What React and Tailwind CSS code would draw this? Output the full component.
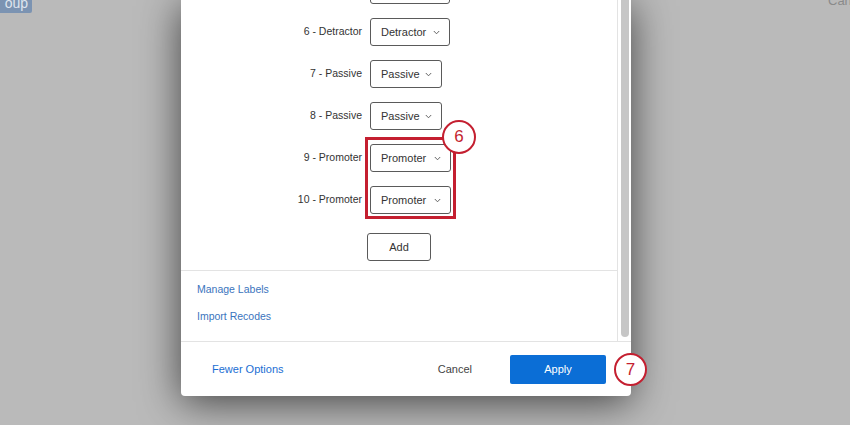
import React from "react";

const Chevron = () => (
  <svg width="7" height="5" viewBox="0 0 7 5" className="ml-auto shrink-0">
    <path d="M0.8 1 L3.5 3.8 L6.2 1" fill="none" stroke="#555" strokeWidth="0.9" />
  </svg>
);

const Select = ({ value, w }) => (
  <div
    className={`flex items-center h-[28px] border border-[#5a5a5a] rounded-[3px] bg-white pl-[10px] pr-[9px] text-[11px] text-[#333] ${w}`}
  >
    <span>{value}</span>
    <Chevron />
  </div>
);

const Row = ({ label, value, w }) => (
  <div className="flex items-center h-[28px]">
    <div className="w-[189px] pr-[8px] text-right text-[10.5px] text-[#333]">{label}</div>
    <Select value={value} w={w} />
  </div>
);

export default function App() {
  return (
    <div
      className="relative w-[850px] h-[425px] overflow-hidden bg-[#bababa]"
      style={{ fontFamily: '"Liberation Sans", Arial, sans-serif' }}
    >
      {/* background page bits */}
      <div className="absolute left-0 top-0 w-[32px] h-[13px] bg-[#7b93b2] rounded-br-[2px] overflow-hidden">
        <span className="absolute right-[4px] top-[-7px] text-[14px] text-[#dfe5ee]">oup</span>
      </div>
      <div className="absolute left-[828px] top-[-9px] text-[13px] text-[#8a8a8a]">Cancel</div>

      {/* modal */}
      <div className="absolute left-[181px] top-0 w-[450px] h-[396px] bg-white rounded-b-[4px] shadow-[0_6px_40px_rgba(0,0,0,0.65)] flex flex-col overflow-hidden">
        <div className="flex h-[341px]">
          <div className="flex-1 overflow-hidden flex flex-col">
            <div className="flex flex-col gap-[14px] mt-[-24px]">
              <Row label="" value="Detractor" w="w-[80px]" />
              <Row label="6 - Detractor" value="Detractor" w="w-[80px]" />
              <Row label="7 - Passive" value="Passive" w="w-[72px]" />
              <Row label="8 - Passive" value="Passive" w="w-[72px]" />
              <Row label="9 - Promoter" value="Promoter" w="w-[81px]" />
              <Row label="10 - Promoter" value="Promoter" w="w-[81px]" />
            </div>
            <div className="flex justify-center mt-[19px]">
              <button className="w-[64px] h-[28px] border border-[#5a5a5a] rounded-[3px] text-[11px] text-[#333] bg-white">
                Add
              </button>
            </div>
            <div className="mt-[9px] border-t border-[#e3e3e3] pl-[16px] pt-[12px] flex flex-col gap-[14px] text-[10.5px] text-[#3b74bd]">
              <div className="leading-[13px]">Manage Labels</div>
              <div className="leading-[13px]">Import Recodes</div>
            </div>
          </div>
          <div className="w-[14px] border-l border-[#e3e3e3] flex justify-center">
            <div className="w-[8px] h-[337px] bg-[#c6c6c6] rounded-b-[4px] ml-[1px]" />
          </div>
        </div>
        <div className="flex-1 border-t border-[#e3e3e3] flex items-center pl-[31px] pr-[25px]">
          <span className="text-[11px] text-[#1a6ed3]">Fewer Options</span>
          <button className="ml-auto mr-[22px] px-[16px] text-[11px] text-[#444]">Cancel</button>
          <button className="w-[96px] h-[29px] bg-[#0b6ed6] rounded-[2px] text-[11px] text-white">Apply</button>
        </div>
      </div>

      {/* annotations */}
      <div className="absolute left-[365px] top-[137px] w-[91px] h-[82px] border-[3px] border-[#c41f30]" />
      <div className="absolute left-[442px] top-[120px] w-[34px] h-[34px] rounded-full bg-white border-[2.5px] border-[#c41f30] flex items-center justify-center text-[17px] text-[#c41f30]">
        6
      </div>
      <div className="absolute left-[614px] top-[353px] w-[33px] h-[33px] rounded-full bg-white border-[2.5px] border-[#c41f30] flex items-center justify-center text-[17px] text-[#c41f30]">
        7
      </div>
    </div>
  );
}
